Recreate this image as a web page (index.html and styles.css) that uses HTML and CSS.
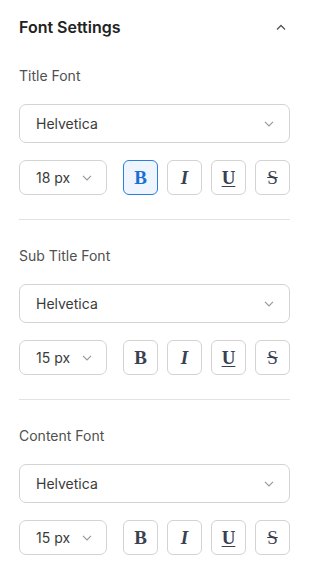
FILE: index.html
```html
<!DOCTYPE html>
<html lang="en">

<head>
    <meta charset="UTF-8">
    <meta name="viewport" content="width=device-width, initial-scale=1.0">
    <title>Font Settings</title>
    <link rel="stylesheet" href="styles.css">
</head>

<body>
    <div class="panel">
        <div class="panel-head">
            <h2>Font Settings</h2>
            <svg class="chev" width="10" height="6" viewBox="0 0 10 6"><path d="M1 5.5L5 1.5L9 5.5" fill="none" stroke="#555" stroke-width="1.3"/></svg>
        </div>

        <div class="section">
            <div class="label">Title Font</div>
            <div class="select">
                <span>Helvetica</span>
                <svg width="10" height="6" viewBox="0 0 10 6"><path d="M1 0.8L5 4.8L9 0.8" fill="none" stroke="#999" stroke-width="1.2"/></svg>
            </div>
            <div class="row">
                <div class="select size">
                    <span>18 px</span>
                    <svg width="10" height="6" viewBox="0 0 10 6"><path d="M1 0.8L5 4.8L9 0.8" fill="none" stroke="#999" stroke-width="1.2"/></svg>
                </div>
                <div class="tools">
                    <button class="tool bold active">B</button>
                    <button class="tool italic">I</button>
                    <button class="tool under">U</button>
                    <button class="tool strike">S</button>
                </div>
            </div>
        </div>

        <div class="section">
            <div class="label">Sub Title Font</div>
            <div class="select">
                <span>Helvetica</span>
                <svg width="10" height="6" viewBox="0 0 10 6"><path d="M1 0.8L5 4.8L9 0.8" fill="none" stroke="#999" stroke-width="1.2"/></svg>
            </div>
            <div class="row">
                <div class="select size">
                    <span>15 px</span>
                    <svg width="10" height="6" viewBox="0 0 10 6"><path d="M1 0.8L5 4.8L9 0.8" fill="none" stroke="#999" stroke-width="1.2"/></svg>
                </div>
                <div class="tools">
                    <button class="tool bold">B</button>
                    <button class="tool italic">I</button>
                    <button class="tool under">U</button>
                    <button class="tool strike">S</button>
                </div>
            </div>
        </div>

        <div class="section last">
            <div class="label">Content Font</div>
            <div class="select">
                <span>Helvetica</span>
                <svg width="10" height="6" viewBox="0 0 10 6"><path d="M1 0.8L5 4.8L9 0.8" fill="none" stroke="#999" stroke-width="1.2"/></svg>
            </div>
            <div class="row">
                <div class="select size">
                    <span>15 px</span>
                    <svg width="10" height="6" viewBox="0 0 10 6"><path d="M1 0.8L5 4.8L9 0.8" fill="none" stroke="#999" stroke-width="1.2"/></svg>
                </div>
                <div class="tools">
                    <button class="tool bold">B</button>
                    <button class="tool italic">I</button>
                    <button class="tool under">U</button>
                    <button class="tool strike">S</button>
                </div>
            </div>
        </div>
    </div>
</body>

</html>
```

FILE: styles.css
```css
* {
    padding: 0;
    margin: 0;
    box-sizing: border-box;
}

body {
    font-family: Inter, "Noto Sans", sans-serif;
    background-color: #fff;
    color: #333;
}

.panel {
    width: 290px;
    padding: 15px 0 0 19px;
}

.panel-head {
    display: flex;
    justify-content: space-between;
    align-items: center;
    height: 24px;
    padding-right: 4px;
}

.panel-head h2 {
    font-size: 16px;
    font-weight: 600;
    color: #222;
    line-height: 24px;
}

.section {
    padding: 27px 0 24px;
    border-bottom: 1px solid #e2e2e2;
}

.section + .section {
    padding-top: 26px;
}

.section.last {
    border-bottom: none;
}

.label {
    font-size: 14px;
    line-height: 20px;
    color: #505050;
    margin-bottom: 18px;
}

.select {
    display: flex;
    justify-content: space-between;
    align-items: center;
    height: 39px;
    border: 1px solid #d3d3d3;
    border-radius: 7px;
    padding: 0 15px 0 16px;
    font-size: 14px;
    color: #3a3a3a;
}

.row {
    display: flex;
    align-items: center;
    margin-top: 17px;
}

.select.size {
    width: 88px;
    height: 35px;
    padding-right: 14px;
}

.tools {
    display: flex;
    gap: 9px;
    margin-left: 16px;
}

.tool {
    width: 35px;
    height: 35px;
    border: 1px solid #d3d3d3;
    border-radius: 6px;
    background-color: #fff;
    font-family: "Liberation Serif", serif;
    font-weight: bold;
    font-size: 19px;
    color: #394150;
    cursor: pointer;
}

.tool.active {
    border-color: #2a7fd9;
    background-color: #eef5fe;
    color: #1a6fd6;
}

.tool.italic {
    font-style: italic;
}

.tool.under {
    text-decoration: underline;
    text-underline-offset: 2px;
}

.tool.strike {
    font-weight: normal;
    text-decoration: line-through;
}
```
